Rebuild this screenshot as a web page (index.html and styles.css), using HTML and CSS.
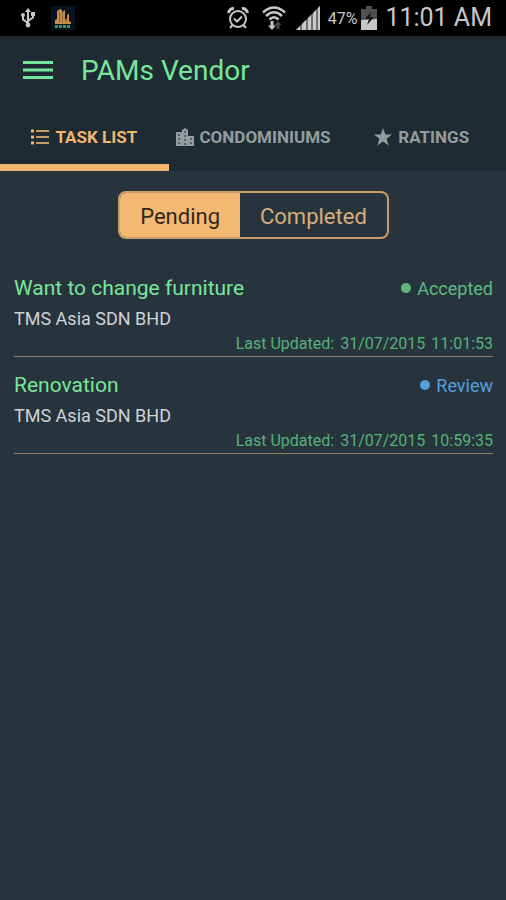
FILE: index.html
```html
<!DOCTYPE html>
<html lang="en">
<head>
<meta charset="utf-8">
<meta name="viewport" content="width=device-width, initial-scale=1">
<title>PAMs Vendor</title>
<link rel="stylesheet" href="styles.css">
</head>
<body>
<div class="status-bar">
  <div class="status-left">
    <svg class="usb" width="16" height="20" viewBox="0 0 16 20" aria-hidden="true">
      <path d="M8 3v14M8 15L3 11.500V7M8 13l5-3.500V6" fill="none" stroke="#c8c8c8" stroke-width="2"/>
      <path d="M8 0l3 4H5z" fill="#c8c8c8"/>
      <circle cx="8" cy="17" r="2.400" fill="#c8c8c8"/>
      <circle cx="3" cy="7" r="2" fill="#c8c8c8"/>
      <path d="M11 4h4v4h-4z" fill="#c8c8c8"/>
    </svg>
    <svg width="24" height="24" viewBox="0 0 24 24" aria-hidden="true">
      <path d="M0 0h24v24H0z" fill="#071321"/>
      <path d="M4 18v-4l2-1V5l3-2 2 1v2l3-2v10l2-2V9l2-1v7l2 1v2z" fill="#c58c4e"/>
      <path d="M8.500 6v10M11.500 6v11M15.500 13v3" stroke="#8c6438" stroke-width="1"/>
      <path d="M4 19h3v3H4zM8 19h3v3H8zM12 19h3v3h-3zM16 19h3v3h-3z" fill="#399766"/>
    </svg>
  </div>
  <div class="status-right">
    <svg width="22" height="24" viewBox="0 0 22 24" fill="none" stroke="#c8c8c8" aria-hidden="true">
      <circle cx="11" cy="13" r="8" stroke-width="2"/>
      <path d="M7 12.500l3 3 5-5" stroke-width="2"/>
      <path d="M1.500 7A5 5 0 0 1 7 2.500M15 2.500A5 5 0 0 1 20.500 7" stroke-width="3"/>
      <path d="M5.500 19l-2.500 3M16.500 19l2.500 3" stroke-width="2"/>
    </svg>
    <svg class="wifi" width="24" height="26" viewBox="0 0 24 26" fill="none" aria-hidden="true">
      <path d="M1 7.500Q12-2.500 23 7.500M4 11Q12 3.500 20 11M7.500 14.500Q12 10 16.500 14.500" stroke="#c8c8c8" stroke-width="2.500"/>
      <path d="M10 16v6" stroke="#c8c8c8" stroke-width="3"/>
      <path d="M6 20.500h8L10 25z" fill="#c8c8c8"/>
      <path d="M16 19v5" stroke="#484848" stroke-width="3"/>
      <path d="M12.500 20l3.500-4 3.500 4z" fill="#484848"/>
    </svg>
    <svg class="signal" width="24" height="24" viewBox="0 0 24 24" aria-hidden="true">
      <path d="M0 24L24 0v24z" fill="#707070"/>
      <path d="M0 24l4-4v4zM6 18l4-4v10H6zM12 12l3-3v15h-3zM17 7l3-3v20h-3zM22 2l2-2v24h-2z" fill="#c8c8c8"/>
    </svg>
    <span class="percent">47%</span>
    <svg width="16" height="24" viewBox="0 0 16 24" aria-hidden="true">
      <path d="M5 0h6v3h5v21H0V3h5z" fill="#505050"/>
      <path d="M0 14l16-1v11H0z" fill="#c8c8c8"/>
      <path d="M10 6L4 13h4l-2 6 7-8H9z" fill="#111"/>
    </svg>
    <time class="clock">11:01 AM</time>
  </div>
</div>
<header class="header">
  <div class="app-bar">
    <button class="menu" type="button" aria-label="Menu">
      <svg width="30" height="20" viewBox="0 0 30 20" aria-hidden="true"><path d="M0 2.500h30M0 10h30M0 17.500h30" stroke="#77e69a" stroke-width="3"/></svg>
    </button>
    <h1 class="title">PAMs Vendor</h1>
  </div>
  <nav class="tabs">
    <a class="tab active" href="#tasks" aria-current="page">
      <svg width="18" height="18" viewBox="0 0 18 18" aria-hidden="true"><path d="M0 3h3M0 9h3M0 15h3" stroke="currentColor" stroke-width="3"/><path d="M5 3h13M5 9h13M5 15h13" stroke="#c59b66" stroke-width="2"/></svg>
      TASK LIST
    </a>
    <a class="tab" href="#condominiums">
      <svg width="18" height="18" viewBox="0 0 18 18" aria-hidden="true"><path d="M0 4h6V2l3-2 3 2v6h6v10H0z" fill="#939d9e"/><path d="M2 7h2M2 11h2M2 15h2M8 4h2M8 8h2M8 12h2M8 16h2M14 11h2M14 15h2" stroke="#566268" stroke-width="2"/></svg>
      CONDOMINIUMS
    </a>
    <a class="tab" href="#ratings">
      <svg width="18" height="18" viewBox="0 0 18 18" aria-hidden="true"><path d="M9 0l2.300 6.500H18l-5.400 4.200L14.600 17.500 9 13.500 3.400 17.500l2-6.800L0 6.500h6.700z" fill="currentColor"/></svg>
      RATINGS
    </a>
  </nav>
</header>
<main class="content" id="tasks">
  <div class="segments">
    <button class="segment selected" type="button" aria-pressed="true">Pending</button>
    <button class="segment" type="button" aria-pressed="false">Completed</button>
  </div>
  <ul class="tasks">
    <li class="task">
      <div class="task-head">
        <h2 class="task-title">Want to change furniture</h2>
        <span class="state accepted">Accepted</span>
      </div>
      <p class="company">TMS Asia SDN BHD</p>
      <p class="updated"><span>Last Updated:</span> <span>31/07/2015</span> <span>11:01:53</span></p>
    </li>
    <li class="task">
      <div class="task-head">
        <h2 class="task-title">Renovation</h2>
        <span class="state review">Review</span>
      </div>
      <p class="company">TMS Asia SDN BHD</p>
      <p class="updated"><span>Last Updated:</span> <span>31/07/2015</span> <span>10:59:35</span></p>
    </li>
  </ul>
</main>
</body>
</html>
```
FILE: styles.css
```css
* {
  box-sizing: border-box;
}

body {
  margin: 0;
  min-height: 100vh;
  background: #27343d;
  font-family: Roboto, "Liberation Sans", sans-serif;
}

svg {
  display: block;
  flex: none;
}

h1, h2, p, ul {
  margin: 0;
  padding: 0;
  font-weight: 400;
}

.status-bar {
  display: flex;
  justify-content: space-between;
  height: 36px;
  padding: 0 14px 0 20px;
  background: #000;
  color: #c8c8c8;
}

.status-left,
.status-right {
  display: flex;
  align-items: center;
}

.status-left {
  gap: 15px;
}

.wifi {
  margin: 0 10px 0 13px;
}

.percent {
  margin: 0 4px 0 8px;
  font-size: 16px;
}

.clock {
  margin-left: 8px;
  font-size: 25px;
  line-height: 38px;
}

.header {
  background: #1f2b33;
}

.app-bar {
  display: flex;
  align-items: center;
  gap: 28px;
  height: 68px;
  padding: 0 23px;
}

.menu {
  padding: 0;
  border: 0;
  background: none;
}

.title {
  color: #77e69a;
  font-size: 28px;
}

.tabs {
  display: flex;
  height: 67px;
}

.tab {
  display: flex;
  flex: 1 1 0;
  align-items: center;
  justify-content: center;
  gap: 6px;
  border-bottom: 7px solid transparent;
  padding-top: 6px;
  color: #939d9e;
  font-size: 17px;
  font-weight: 700;
  text-decoration: none;
}

.active {
  border-color: #f3b76f;
  color: #f0b66f;
}

.content {
  padding: 20px 13px 20px 14px;
}

.segments {
  display: flex;
  width: fit-content;
  margin: 0 auto;
  overflow: hidden;
  border: 2px solid #c99e6c;
  border-radius: 8px;
}

.segment {
  height: 44px;
  padding: 2px 20px 0;
  border: 0;
  background: none;
  color: #d9ad79;
  font: 22px Roboto, "Liberation Sans", sans-serif;
}

.selected {
  background: #f3b972;
  color: #33271b;
}

.tasks {
  padding-top: 29px;
  list-style: none;
}

.task {
  margin-bottom: 8px;
  border-bottom: 1px solid #957b5d;
}

.task-head {
  display: flex;
  align-items: center;
  justify-content: space-between;
  height: 40px;
}

.task-title {
  color: #77e69a;
  font-size: 21px;
}

.state {
  display: flex;
  align-items: center;
  gap: 6px;
  font-size: 18px;
}

.state::before {
  content: "";
  width: 10px;
  height: 10px;
  border-radius: 50%;
  background: currentColor;
}

.accepted {
  color: #5dbb82;
}

.review {
  color: #559fdc;
}

.company {
  color: #d0d2d3;
  font-size: 18px;
  line-height: 22px;
}

.updated {
  display: flex;
  justify-content: flex-end;
  gap: 6px;
  padding: 5px 0 3px;
  color: #55b079;
  font-size: 16px;
  line-height: 18px;
}
```
